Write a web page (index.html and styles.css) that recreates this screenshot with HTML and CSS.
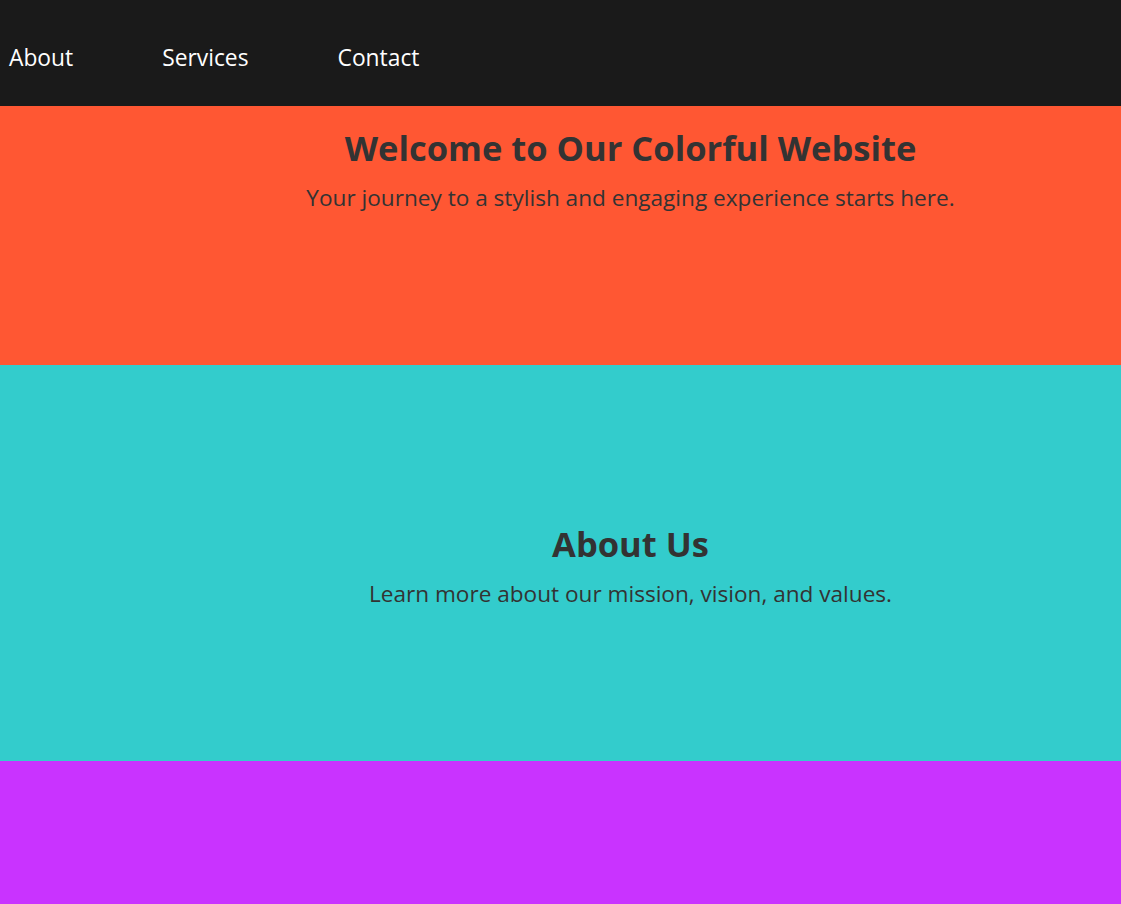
FILE: index.html
```html
<!DOCTYPE html>
<html lang="en">
<head>
<meta charset="utf-8">
<title>Colorful Website</title>
<link rel="stylesheet" href="styles.css">
</head>
<body>
<nav class="nav">
  <a class="nav-link" href="#about">About</a>
  <a class="nav-link" href="#services">Services</a>
  <a class="nav-link" href="#contact">Contact</a>
</nav>
<header class="hero">
  <h1 class="title">Welcome to Our Colorful Website</h1>
  <p class="lead">Your journey to a stylish and engaging experience starts here.</p>
</header>
<section class="about" id="about">
  <h2 class="title">About Us</h2>
  <p class="lead">Learn more about our mission, vision, and values.</p>
</section>
<section class="services" id="services"></section>
</body>
</html>
```
FILE: styles.css
```css
* { box-sizing: border-box; }
html, body { margin: 0; padding: 0; }
body {
  font-family: "Open Sans", "Noto Sans", sans-serif;
  color: #333333;
  overflow: hidden;
}
.nav {
  height: 106px;
  background: #1a1a1a;
  display: flex;
  align-items: center;
  gap: 89px;
  padding: 8px 0 0 9px;
}
.nav-link {
  color: #ffffff;
  text-decoration: none;
  font-size: 22.8px;
}
.hero {
  height: 259px;
  background: #ff5733;
  text-align: center;
  padding: 20px 0 0 140px;
}
.title {
  margin: 0;
  font-size: 34.5px;
  font-weight: 700;
  line-height: 44px;
}
.lead {
  margin: 13px 0 0;
  font-size: 22.6px;
  line-height: 30px;
}
.about {
  height: 396px;
  background: #33cccc;
  text-align: center;
  padding: 4px 0 0 140px;
  display: flex;
  flex-direction: column;
  justify-content: center;
}
.services {
  height: 143px;
  background: #c933ff;
}
```
